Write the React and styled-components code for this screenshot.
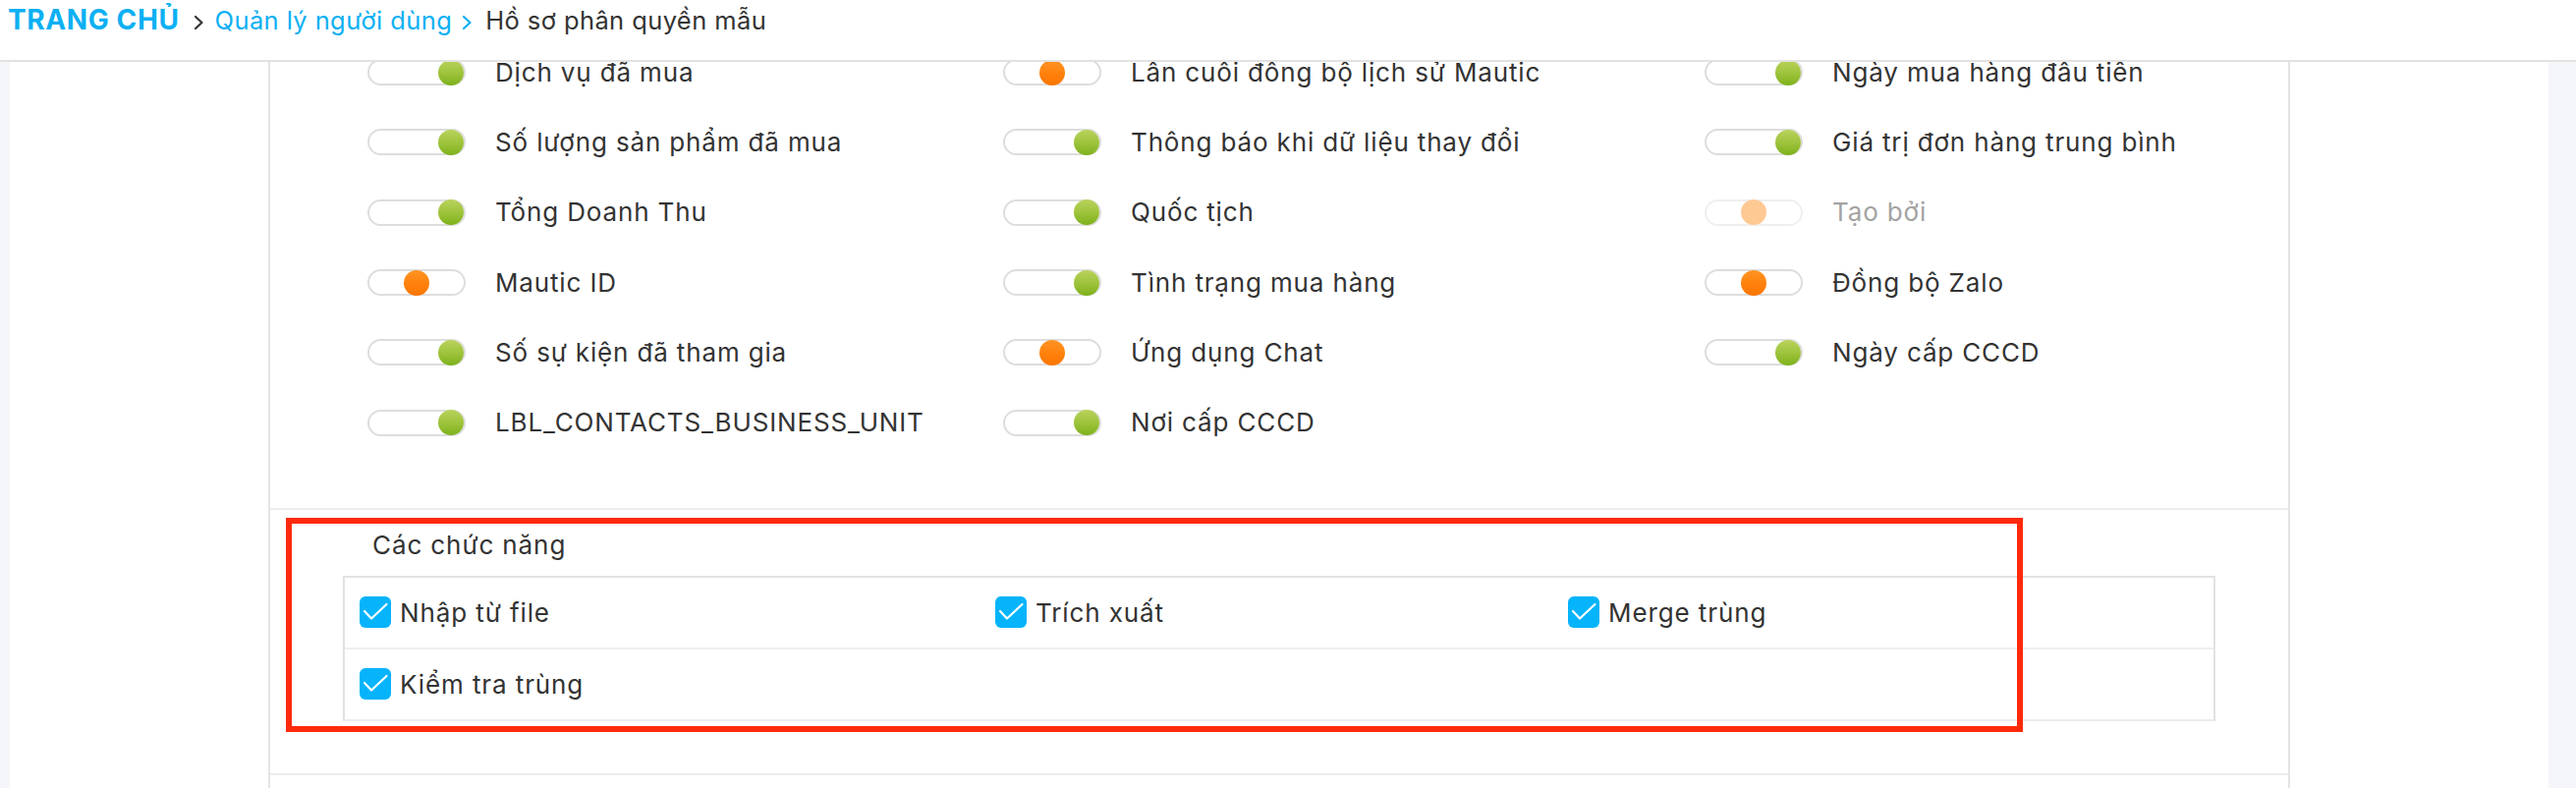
import styled, { createGlobalStyle } from "styled-components";

const GlobalStyle = createGlobalStyle`
  html, body {
    margin: 0;
    padding: 0;
    height: 100%;
  }
  body {
    background: #f4f6fa;
    font-family: Inter, "Noto Sans", sans-serif;
    color: #333;
  }
  #root {
    height: 100vh;
  }
`;

const toggles = [
  { label: "Dịch vụ đã mua", state: "on" },
  { label: "Lần cuối đồng bộ lịch sử Mautic", state: "off" },
  { label: "Ngày mua hàng đầu tiên", state: "on" },
  { label: "Số lượng sản phẩm đã mua", state: "on" },
  { label: "Thông báo khi dữ liệu thay đổi", state: "on" },
  { label: "Giá trị đơn hàng trung bình", state: "on" },
  { label: "Tổng Doanh Thu", state: "on" },
  { label: "Quốc tịch", state: "on" },
  { label: "Tạo bởi", state: "disabled" },
  { label: "Mautic ID", state: "off" },
  { label: "Tình trạng mua hàng", state: "on" },
  { label: "Đồng bộ Zalo", state: "off" },
  { label: "Số sự kiện đã tham gia", state: "on" },
  { label: "Ứng dụng Chat", state: "off" },
  { label: "Ngày cấp CCCD", state: "on" },
  { label: "LBL_CONTACTS_BUSINESS_UNIT", state: "on" },
  { label: "Nơi cấp CCCD", state: "on" },
];

const features = [
  ["Nhập từ file", "Trích xuất", "Merge trùng"],
  ["Kiểm tra trùng"],
];

function Chevron({ color }) {
  return (
    <svg width="11" height="16" viewBox="0 0 11 16">
      <polyline
        points="2,2 8.5,8 2,14"
        fill="none"
        stroke={color}
        strokeWidth="2.2"
        strokeLinecap="round"
        strokeLinejoin="round"
      />
    </svg>
  );
}

function CheckIcon() {
  return (
    <svg width="32" height="32" viewBox="0 0 32 32">
      <polyline
        points="5,15 12,22.5 27.5,8"
        fill="none"
        stroke="#fff"
        strokeWidth="2.2"
        strokeLinecap="round"
        strokeLinejoin="round"
      />
    </svg>
  );
}

export default function App() {
  return (
    <Page>
      <GlobalStyle />
      <Header>
        <Crumb $home>TRANG CHỦ</Crumb>
        <Sep>
          <Chevron color="#333" />
        </Sep>
        <Crumb>Quản lý người dùng</Crumb>
        <Sep $last>
          <Chevron color="#0db0f3" />
        </Sep>
        <Crumb $current>Hồ sơ phân quyền mẫu</Crumb>
      </Header>
      <Main>
        <Card>
          <ToggleGrid>
            {toggles.map((t) => (
              <ToggleItem key={t.label}>
                <Track $state={t.state}>
                  <Knob $state={t.state} />
                </Track>
                <ToggleLabel $disabled={t.state === "disabled"}>
                  {t.label}
                </ToggleLabel>
              </ToggleItem>
            ))}
          </ToggleGrid>
          <FeatureSection>
            <SectionTitle>Các chức năng</SectionTitle>
            <FeatureTable>
              {features.map((row, i) => (
                <FeatureRow key={i}>
                  {row.map((name) => (
                    <FeatureCell key={name}>
                      <CheckBox>
                        <CheckIcon />
                      </CheckBox>
                      {name}
                    </FeatureCell>
                  ))}
                </FeatureRow>
              ))}
            </FeatureTable>
            <Highlight />
          </FeatureSection>
        </Card>
      </Main>
    </Page>
  );
}

const Page = styled.div`
  height: 100vh;
  display: flex;
  flex-direction: column;
`;

const Header = styled.div`
  flex-shrink: 0;
  box-sizing: border-box;
  height: 63px;
  padding: 3px 0 0 8px;
  background: #fff;
  border-bottom: 2px solid #e2e2e2;
  display: flex;
  align-items: baseline;
`;

const Crumb = styled.span`
  font-size: ${(p) => (p.$home ? "28px" : "25.5px")};
  font-weight: ${(p) => (p.$home ? 700 : 400)};
  color: ${(p) => (p.$current ? "#333" : "#0db0f3")};
  line-height: 34px;
  letter-spacing: ${(p) => (p.$home ? "0.6px" : "0.4px")};
  white-space: nowrap;
`;

const Sep = styled.span`
  display: inline-flex;
  align-self: flex-start;
  margin: 12px ${(p) => (p.$last ? "13px" : "11px")} 0
    ${(p) => (p.$last ? "10px" : "14px")};
`;

const Main = styled.div`
  flex: 1;
  overflow: hidden;
  margin: 0 28px 0 10px;
  background: #fff;
  display: flex;
  justify-content: center;
`;

const Card = styled.div`
  width: 2058px;
  box-sizing: border-box;
  border-left: 2px solid #e4e4e4;
  border-right: 2px solid #e4e4e4;
  display: flex;
  flex-direction: column;
`;

const ToggleGrid = styled.div`
  display: grid;
  grid-template-columns: 647px 714px 1fr;
  grid-auto-rows: 71.33px;
  margin-top: -25px;
  padding: 0 0 51px 99px;
  border-bottom: 2px solid #ececec;
`;

const ToggleItem = styled.div`
  display: flex;
  align-items: center;
  gap: 30px;
`;

const Track = styled.div`
  width: 100px;
  height: 27px;
  box-sizing: border-box;
  border: 2px solid ${(p) => (p.$state === "disabled" ? "#efefef" : "#dddddd")};
  border-radius: 14px;
  background: #fff;
  display: flex;
  align-items: center;
  justify-content: ${(p) => (p.$state === "on" ? "flex-end" : "center")};
`;

const knobColors = {
  on: "linear-gradient(180deg, #b9d35c 0%, #9cc23a 55%, #7db11b 100%)",
  off: "linear-gradient(180deg, #ff9424 0%, #ff7f0a 60%, #fb7500 100%)",
  disabled: "#ffc994",
};

const Knob = styled.span`
  width: 26px;
  height: 26px;
  flex-shrink: 0;
  margin: -2px 0;
  border-radius: 50%;
  background: ${(p) => knobColors[p.$state]};
`;

const ToggleLabel = styled.span`
  font-size: 26px;
  line-height: 32px;
  letter-spacing: 0.85px;
  color: ${(p) => (p.$disabled ? "#a3a3a3" : "#333")};
  white-space: nowrap;
`;

const FeatureSection = styled.div`
  position: relative;
  padding: 20px 74px 53px;
  border-bottom: 2px solid #ececec;
`;

const SectionTitle = styled.div`
  margin: 0 0 15px 30px;
  font-size: 26px;
  line-height: 32px;
  letter-spacing: 0.9px;
  color: #333;
`;

const FeatureTable = styled.div`
  border: 2px solid #e2e2e2;
  border-bottom-color: #ececec;
`;

const FeatureRow = styled.div`
  display: grid;
  grid-template-columns: 647px 583px 1fr;
  height: 71px;
  & + & {
    border-top: 2px solid #eeeeee;
  }
`;

const FeatureCell = styled.div`
  display: flex;
  align-items: center;
  gap: 9px;
  padding-left: 15px;
  font-size: 26px;
  letter-spacing: 0.9px;
  color: #333;
  white-space: nowrap;
`;

const CheckBox = styled.span`
  width: 32px;
  height: 32px;
  border-radius: 6px;
  background: #06b4fc;
  display: flex;
  flex-shrink: 0;
`;

const Highlight = styled.div`
  position: absolute;
  left: 16px;
  top: 8px;
  width: 1768px;
  height: 218px;
  box-sizing: border-box;
  border: 6px solid #ff2a0c;
  pointer-events: none;
`;
